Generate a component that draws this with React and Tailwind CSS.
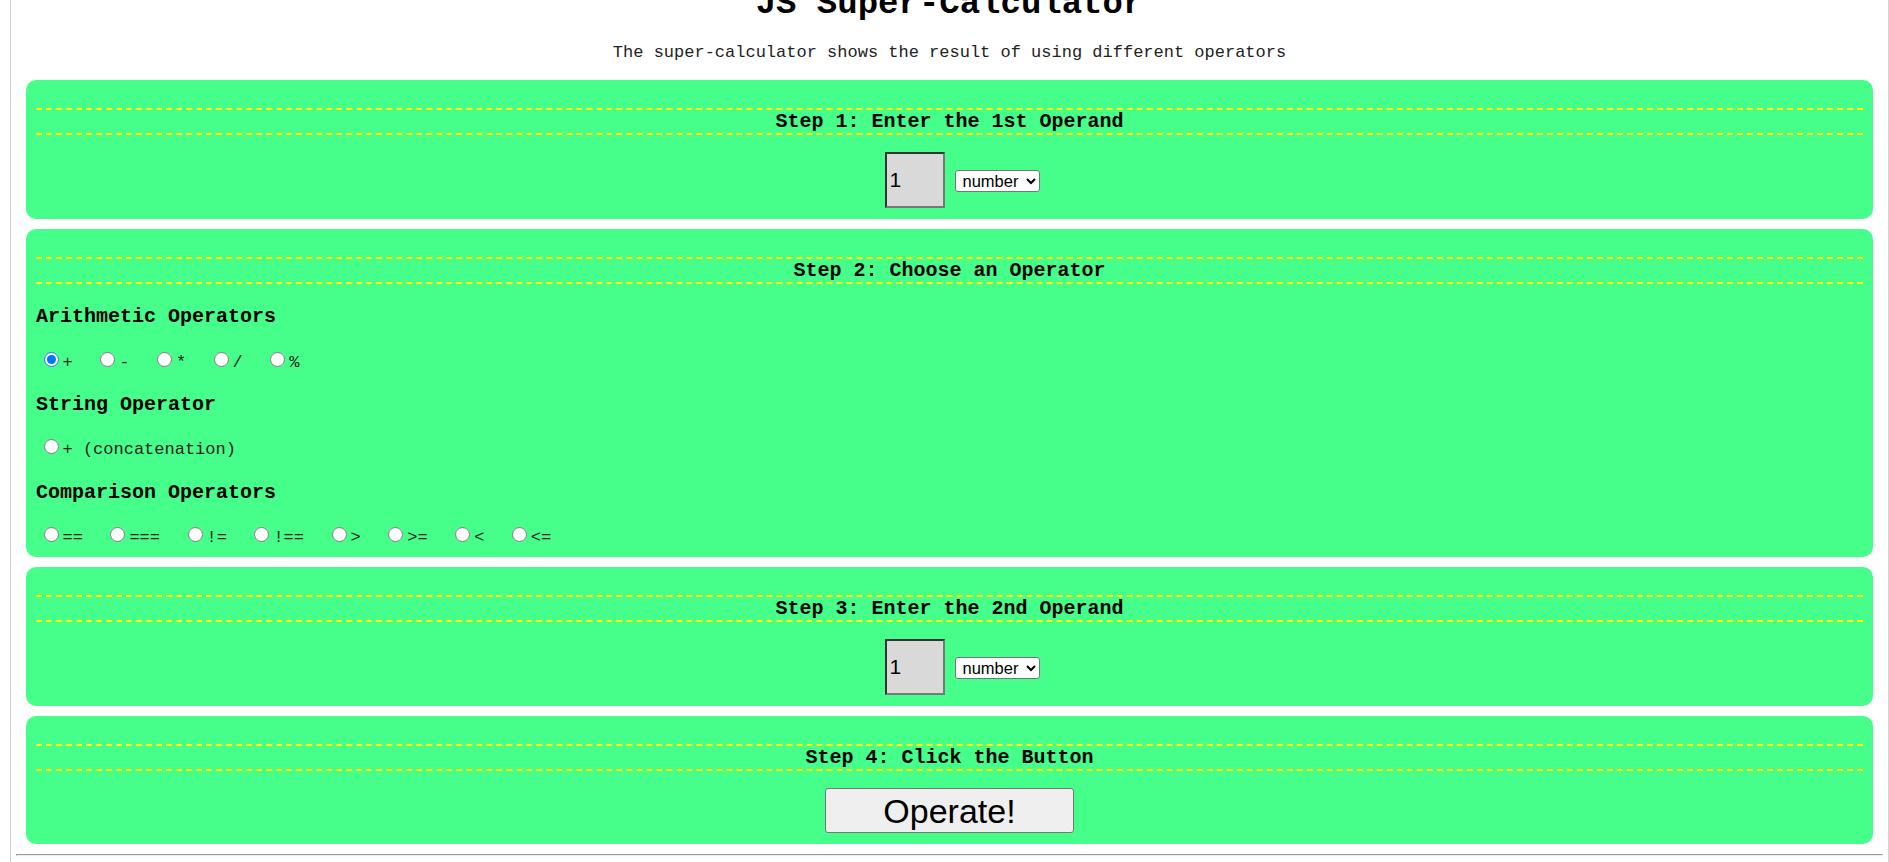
import React from "react";

const sans = "font-['Liberation_Sans',Arial,sans-serif]";

const StepHeading = ({ children }) => (
  <h3 className="h-[27px] flex items-center justify-center border-y-2 border-dashed border-[#ffff00] text-[20px] font-bold text-black">
    {children}
  </h3>
);

const Card = ({ children }) => (
  <section className="rounded-[10px] bg-[#45ff8a] px-[10px] pt-[28px]">{children}</section>
);

const OperandRow = () => (
  <div className="mt-[17px] pb-[11px] pl-[25px] flex justify-center items-start">
    <input
      type="text"
      defaultValue="1"
      className={`w-[60px] h-[56px] bg-[#d9d9d9] border-2 border-t-[#333] border-l-[#333] border-r-[#777] border-b-[#777] px-[3px] text-[21px] text-black outline-none ${sans}`}
    />
    <select
      defaultValue="number"
      className={`ml-[10px] mt-[18px] w-[85px] h-[22px] bg-white border border-[#767676] rounded-[3px] pl-[3px] text-[16.5px] text-black ${sans}`}
    >
      <option value="number">number</option>
      <option value="string">string</option>
    </select>
  </div>
);

const Radio = ({ label, checked }) => (
  <span className="mr-[27.5px]">
    <input
      type="radio"
      name="operator"
      defaultChecked={checked}
      className="w-[15px] h-[15px] align-baseline"
    />
    <span className="ml-[4px]">{label}</span>
  </span>
);

const RadioRow = ({ items, top }) => (
  <div className={`h-[44px] ${top} pl-[7.5px] text-[17px] leading-normal whitespace-nowrap text-[#222]`}>
    {items.map((it, i) => (
      <Radio key={i} label={it} checked={it === "+" && i === 0 && items.length === 5} />
    ))}
  </div>
);

const GroupTitle = ({ children }) => (
  <h3 className="h-[44px] pt-[4px] flex items-center text-[20px] font-bold text-black">{children}</h3>
);

export default function App() {
  return (
    <div className="ml-[10px] min-h-[862px] flex flex-col border-x border-[#d3d3d3] bg-white font-['Liberation_Mono','Courier_New',monospace] text-black">
      <h1 className="-mt-[15px] h-[38px] leading-[38px] text-center text-[34px] font-bold">
        JS Super-Calculator
      </h1>
      <p className="mt-[20px] leading-[20px] text-center text-[17px] text-[#222]">
        The super-calculator shows the result of using different operators
      </p>

      <div className="mt-[17px] px-[15px] flex flex-col gap-[10px]">
        <Card>
          <StepHeading>Step 1: Enter the 1st Operand</StepHeading>
          <OperandRow />
        </Card>

        <Card>
          <StepHeading>Step 2: Choose an Operator</StepHeading>
          <div className="mt-[9px]">
            <GroupTitle>Arithmetic Operators</GroupTitle>
            <RadioRow items={["+", "-", "*", "/", "%"]} top="pt-[13px]" />
            <GroupTitle>String Operator</GroupTitle>
            <div className="h-[44px] pt-[12px] pl-[7.5px] text-[17px] leading-normal whitespace-nowrap text-[#222]">
              <Radio label="+ (concatenation)" />
            </div>
            <GroupTitle>Comparison Operators</GroupTitle>
            <RadioRow items={["==", "===", "!=", "!==", ">", ">=", "<", "<="]} top="pt-[12px]" />
          </div>
        </Card>

        <Card>
          <StepHeading>Step 3: Enter the 2nd Operand</StepHeading>
          <OperandRow />
        </Card>

        <Card>
          <StepHeading>Step 4: Click the Button</StepHeading>
          <div className="mt-[17px] pb-[11px] flex justify-center">
            <button
              className={`w-[249px] h-[45px] bg-[#efefef] border border-[#767676] rounded-[3px] text-[34px] leading-none text-black ${sans}`}
            >
              Operate!
            </button>
          </div>
        </Card>
      </div>

      <div className="mt-[10px] mx-[5px] h-[2px] border border-t-[#9a9a9a] border-l-[#9a9a9a] border-r-[#eeeeee] border-b-[#eeeeee]" />
    </div>
  );
}
